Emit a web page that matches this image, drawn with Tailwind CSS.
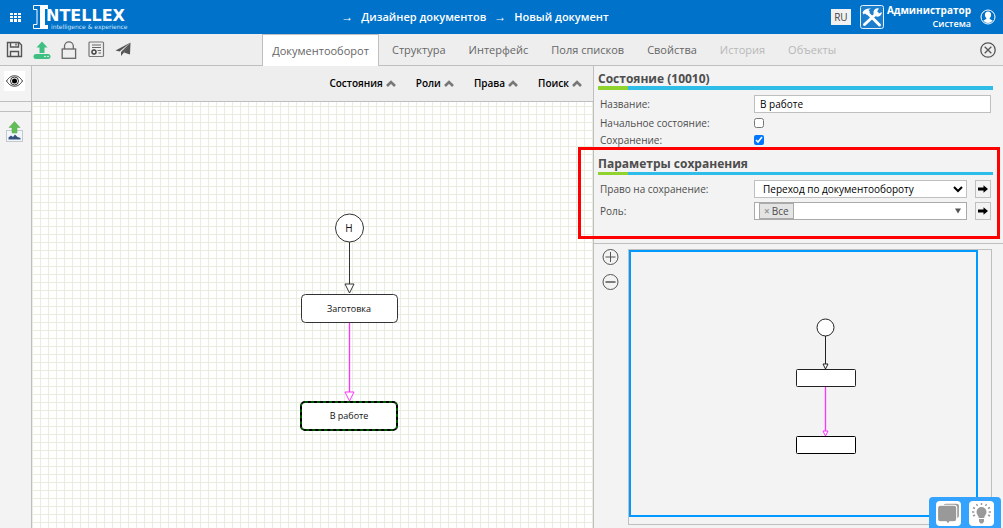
<!DOCTYPE html>
<html lang="ru">
<head>
<meta charset="utf-8">
<meta name="viewport" content="width=device-width, initial-scale=1">
<title>Новый документ</title>
<script src="https://cdn.jsdelivr.net/npm/@tailwindcss/browser@4"></script>
</head>
<body class="relative flex h-screen flex-col overflow-hidden bg-[#f3f3f3] font-['Open_Sans','Noto_Sans',sans-serif] text-[10px] text-[#4d4d4d]">

<header class="flex h-[34px] shrink-0 items-center bg-[#0072c9] text-white">
  <button aria-label="Меню" class="ml-2.5 flex w-[11px]">
    <svg width="11" height="9" viewBox="0 0 11 9" fill="#fff" shape-rendering="crispEdges"><path d="M0 0h3v2H0zM4 0h3v2H4zM8 0h3v2H8zM0 3h3v2H0zM4 3h3v2H4zM8 3h3v2H8zM0 6h3v3H0zM4 6h3v3H4zM8 6h3v3H8z"/></svg>
  </button>
  <a href="#" aria-label="Intellex" class="ml-3 flex w-24">
    <svg width="15" height="24" viewBox="0 0 15 24" class="shrink-0" fill="#fff">
      <path d="M7 .5H.5v4H4v15H.5v4H7" fill="none" stroke="#fff"/>
      <path d="M7 0h8v4h-3v16h3v4H7z"/>
    </svg>
    <span class="-ml-[2px] flex flex-col pt-1 font-['DejaVu_Sans']">
      <span class="text-[16px] font-bold leading-[14px]">NTELLEX</span>
      <span class="pl-[5px] text-[6px] leading-[7px] text-[#cfe4f6]">intelligence &amp; experience</span>
    </span>
  </a>
  <nav class="flex flex-1 items-center justify-center gap-2 pr-[10px] text-[11px] font-semibold leading-4">
    <span class="text-[12px]">→</span><a href="#">Дизайнер документов</a><span class="text-[12px]">→</span><a href="#">Новый документ</a>
  </nav>
  <button class="h-4 w-5 bg-[#f1f1f1] text-[10px] leading-4 text-[#444]">RU</button>
  <svg class="ml-2" width="26" height="26" viewBox="0 0 26 26">
    <rect x="1.500" y="1.500" width="23" height="23" rx="2" fill="#1b7fce" stroke="#e4f1fb"/>
    <path d="M8 8.500 20.500 21" stroke="#fff" stroke-width="3" stroke-linecap="round"/>
    <path d="M3.500 8.500C5 5.500 8 4 12 4.500L9.500 6l1.500 2-3 3-2-1.500-1.500 1z" fill="#fff"/>
    <path d="M5.500 20.500 18 9" stroke="#fff" stroke-width="3" stroke-linecap="round"/>
    <path d="M20 4.500a4.200 4.200 0 1 0 2.800 3.500l-2.800 1.500-2-2z" fill="#fff"/>
  </svg>
  <div class="ml-[2px] text-right leading-[13px]">
    <div class="text-[10px] font-bold">Администратор</div>
    <div class="text-[9px] font-semibold">Система</div>
  </div>
  <button aria-label="Профиль" class="ml-[9px] mr-[7px]">
    <svg width="16" height="16" viewBox="0 0 16 16"><circle cx="8" cy="8" r="7" fill="none" stroke="#fff"/><path d="M8 2.500c2 0 3.200 1.300 3.100 3.300 0 1.500-.7 2.600-1.400 3.300v1l3 1.400C11.500 13.200 9.800 14 8 14s-3.500-.8-4.700-2.500l3-1.400v-1C5.500 8.400 4.900 7.300 4.900 5.800 4.800 3.800 6 2.500 8 2.500z" fill="#fff"/></svg>
  </button>
</header>

<div class="flex h-8 shrink-0 items-stretch border-b border-[#bfbfbf] bg-[#eee]">
  <div class="flex w-[262px] shrink-0 items-center gap-[10px] pl-[6px]">
    <button aria-label="Сохранить"><svg width="17" height="17" viewBox="0 0 17 17" fill="none" stroke="#555" stroke-width="1.400"><path d="M1.500 1.500h11.500l2.500 2.500v11.500h-14z"/><path d="M4.500 1.500v4.500h8V1.500M4.500 15.500v-5h8v5M10 2.500v2"/></svg></button>
    <button aria-label="Опубликовать"><svg width="18" height="18" viewBox="0 0 18 18" fill="#40bf82"><path d="M9 .5 14.500 6.500h-3V12h-5V6.500h-3z"/><rect x=".5" y="13" width="17" height="5" rx="2.500"/><circle cx="12" cy="15.500" r=".8" fill="#fff"/><circle cx="15" cy="15.500" r=".8" fill="#fff"/></svg></button>
    <button aria-label="Заблокировать"><svg width="17" height="18" viewBox="0 0 17 18" fill="none" stroke="#666" stroke-width="1.300"><rect x="1.200" y="8" width="13.400" height="9.300"/><path d="M3.500 8V5.300a4.400 4.400 0 0 1 8.800 0V8"/></svg></button>
    <button aria-label="Журнал"><svg width="17" height="17" viewBox="0 0 17 17" fill="none" stroke="#666" stroke-width="1.200"><rect x="1" y="1" width="14.500" height="14.500" rx="1" stroke="#777"/><path d="M4 4h9M4 6.500h9M9.500 9.500H13M10.500 12H13"/><circle cx="6" cy="11" r="2" stroke="#444" stroke-width="1.400"/><path d="M6 8v1M6 13v1M3 11h1M8 11h1"/></svg></button>
    <button aria-label="Отправить"><svg width="16" height="15" viewBox="0 0 16 15" fill="#555"><path d="M15.500.5.500 8.500l4 1zM15.500.5 6 10v4l2.500-3zM15.500.5 9 10.500l6 2z"/></svg></button>
  </div>
  <nav class="-mb-px flex flex-1 text-[11px] leading-8 text-[#666]">
    <a href="#" class="w-[117px] border-x border-t border-[#bfbfbf] bg-white text-center">Документооборот</a>
    <a href="#" class="ml-[13px]">Структура</a>
    <a href="#" class="ml-[23px]">Интерфейс</a>
    <a href="#" class="ml-[23px]">Поля списков</a>
    <a href="#" class="ml-[23px]">Свойства</a>
    <a href="#" class="ml-[23px] text-[#b8b8b8]">История</a>
    <a href="#" class="ml-[23px] text-[#b8b8b8]">Объекты</a>
  </nav>
  <button aria-label="Закрыть" class="mr-[7px]"><svg width="16" height="16" viewBox="0 0 16 16" fill="none" stroke="#555" stroke-width="1.300"><circle cx="8" cy="8" r="7.200"/><path d="m4.700 4.700 6.600 6.600m0-6.600-6.600 6.600"/></svg></button>
</div>

<main class="flex min-h-0 flex-1">
  <aside class="flex w-8 shrink-0 flex-col items-center border-r border-[#bfbfbf] bg-[#f3f3f3]">
    <div class="flex h-9 w-full shrink-0 border-b border-[#bfbfbf] pl-1 pt-[5px]">
      <button aria-label="Просмотр" class="flex h-5 w-[21px] items-center justify-center bg-white"><svg width="17" height="12" viewBox="0 0 17 12"><path d="M.5 6C3.500 1.500 6 .8 8.500.8S13.500 1.500 16.500 6c-3 4.500-5.500 5.200-8 5.200S3.500 10.500.5 6z" fill="none" stroke="#333"/><circle cx="8.500" cy="6" r="4" fill="none" stroke="#333"/><circle cx="8.500" cy="6" r="2.500"/></svg></button>
    </div>
    <div class="h-[10px] w-full shrink-0 border-b border-[#bfbfbf]"></div>
    <button aria-label="Загрузить изображение" class="mr-[2px] mt-[9px]"><svg width="17" height="21" viewBox="0 0 17 21"><rect x=".5" y="9.500" width="16" height="11" fill="#f2f6fb" stroke="#c3c9d0"/><path d="M2.500 18.500v-2l2.500-2 2 1.500 2-2.500 2.500 2.500 3 1v1.500z" fill="#35527e"/><path d="m8.500.5 5.500 6h-3V12H6V6.500H3z" fill="#62bd57" stroke="#55a94b" stroke-width=".5"/></svg></button>
  </aside>

  <section class="flex min-w-0 flex-1 flex-col">
    <div class="flex h-9 shrink-0 items-center justify-end gap-5 border-b border-[#bfbfbf] bg-[#eee] pr-[11px] text-[10px] font-semibold text-black">
      <button class="flex items-center gap-[3px]">Состояния <svg width="10" height="8" viewBox="0 0 10 8" fill="none" stroke="#777" stroke-width="2.600"><path d="m1 6 4-4 4 4"/></svg></button>
      <button class="flex items-center gap-[3px]">Роли <svg width="10" height="8" viewBox="0 0 10 8" fill="none" stroke="#777" stroke-width="2.600"><path d="m1 6 4-4 4 4"/></svg></button>
      <button class="flex items-center gap-[3px]">Права <svg width="10" height="8" viewBox="0 0 10 8" fill="none" stroke="#777" stroke-width="2.600"><path d="m1 6 4-4 4 4"/></svg></button>
      <button class="flex items-center gap-[3px]">Поиск <svg width="10" height="8" viewBox="0 0 10 8" fill="none" stroke="#777" stroke-width="2.600"><path d="m1 6 4-4 4 4"/></svg></button>
    </div>
    <div class="min-h-0 flex-1 overflow-hidden bg-white">
      <svg width="100%" height="100%" font-family="Open Sans" font-size="9" text-anchor="middle" fill="#111">
        <defs><pattern id="grid" width="8" height="8" patternUnits="userSpaceOnUse"><path d="M.5 0v8M0 4.500h8" stroke="#e8eedf" fill="none"/></pattern></defs>
        <rect width="100%" height="100%" fill="url(#grid)"/>
        <circle cx="317.500" cy="126" r="14" fill="#fff" stroke="#333"/>
        <text x="317" y="130" font-size="10">Н</text>
        <path d="M317.500 140v42" stroke="#333"/><path d="M313 182h9l-4.500 9z" fill="#fff" stroke="#333"/>
        <rect x="269.500" y="192.500" width="96" height="28" rx="4" fill="#fff" stroke="#333"/>
        <text x="317" y="210">Заготовка</text>
        <path d="M317.500 221v69" stroke="#f3f" stroke-width="1.300"/><path d="M313 290h9l-4.500 9z" fill="#fff" stroke="#f3f"/>
        <rect x="269" y="300" width="96" height="28" rx="4" fill="#fff" stroke="#000" stroke-width="2"/>
        <rect x="269" y="300" width="96" height="28" rx="4" fill="none" stroke="#0a0" stroke-dasharray="3 3"/>
        <text x="317" y="317">В работе</text>
      </svg>
    </div>
  </section>

  <aside class="flex w-[410px] shrink-0 flex-col border-l border-[#bfbfbf] bg-[#f3f3f3]">
    <form class="flex h-[178px] shrink-0 flex-col border-b border-[#bfbfbf] pl-1 pr-[10px]">
      <h2 class="mt-1 h-4 text-[12px] font-bold leading-[18px]">Состояние (10010)</h2>
      <div class="flex h-1 shrink-0 bg-[#2dbde8]"><div class="w-[30px] bg-[#90d32f]"></div></div>
      <div class="mt-[5px] flex h-[18px] items-center pl-[2px]">
        <label for="name" class="w-[154px]">Название:</label>
        <input id="name" value="В работе" class="mr-[2px] h-[18px] min-w-0 flex-1 border border-[#bfbfbf] bg-white px-[5px] text-[10px] text-black">
      </div>
      <div class="mt-px flex h-[18px] items-center pl-[2px]">
        <label for="start" class="w-[154px]">Начальное состояние:</label><input id="start" type="checkbox" class="size-[10px]">
      </div>
      <div class="flex h-4 items-center pl-[2px]">
        <label for="save" class="w-[154px]">Сохранение:</label><input id="save" type="checkbox" checked class="size-[10px]">
      </div>
      <h2 class="mt-[7px] h-4 text-[12px] font-bold leading-[18px]">Параметры сохранения</h2>
      <div class="mt-px flex h-[3px] shrink-0 bg-[#2dbde8]"><div class="w-[30px] bg-[#90d32f]"></div></div>
      <div class="mt-[5px] flex h-[18px] items-center pl-[2px]">
        <label for="right" class="w-[154px]">Право на сохранение:</label>
        <select id="right" class="h-[18px] min-w-0 flex-1 border border-[#bfbfbf] bg-white pl-1 text-[10px] text-black"><option>Переход по документообороту</option></select>
        <button type="button" aria-label="Открыть право" class="ml-2 mr-[2px] flex h-[18px] w-4 items-center justify-center border border-[#bfbfbf]"><svg width="10" height="8" viewBox="0 0 10 8"><path d="M0 2.500h5.500V.2L10 4 5.500 7.800V5.500H0z"/></svg></button>
      </div>
      <div class="mt-1 flex h-[18px] items-center pl-[2px]">
        <label for="role" class="w-[154px]">Роль:</label>
        <div class="flex h-[18px] min-w-0 flex-1 border border-[#aaa] bg-white pl-1">
          <span class="flex h-4 items-center gap-[2px] border border-[#aaa] bg-[#e4e4e4] px-1"><button type="button" aria-label="Удалить" class="text-[10px] font-bold text-[#999]">×</button>Все</span>
          <input id="role" class="min-w-0 flex-1">
          <button type="button" aria-label="Показать роли" class="mr-[5px]"><svg width="6" height="6" viewBox="0 0 6 6" fill="#555"><path d="M0 .5h6l-3 5z"/></svg></button>
        </div>
        <button type="button" aria-label="Открыть роль" class="ml-2 mr-[2px] flex h-[18px] w-4 items-center justify-center border border-[#bfbfbf]"><svg width="10" height="8" viewBox="0 0 10 8"><path d="M0 2.500h5.500V.2L10 4 5.500 7.800V5.500H0z"/></svg></button>
      </div>
    </form>
    <div class="flex min-h-0 flex-1 pb-[3px] pl-2 pr-[11px] pt-[5px]">
      <div class="flex w-[26px] shrink-0 flex-col gap-[9px]">
        <button aria-label="Увеличить" class="size-4"><svg width="17" height="17" viewBox="0 0 17 17" fill="none" stroke="#555"><circle cx="8.500" cy="8" r="7.500"/><path d="M3.500 8h10M8.500 3v10"/></svg></button>
        <button aria-label="Уменьшить" class="size-4"><svg width="17" height="17" viewBox="0 0 17 17" fill="none" stroke="#555"><circle cx="8.500" cy="8" r="7.500"/><path d="M3.500 8h10" stroke-width="1.500"/></svg></button>
      </div>
      <div class="flex min-w-0 flex-1 border border-[#bfbfbf] pb-[7px] pr-[13px]">
        <div class="min-w-0 flex-1 border-2 border-[#0099ff]">
          <svg width="100%" height="100%" fill="#fff">
            <circle cx="194.500" cy="75.500" r="8.500" stroke="#222"/>
            <path d="M194.500 84v28" stroke="#222"/><path d="M192 112h5l-2.500 5z" stroke="#222"/>
            <rect x="165.500" y="117.500" width="59" height="17" rx="1" stroke="#222"/>
            <path d="M194.500 135v44" stroke="#f3f" stroke-width="1.300"/><path d="M192 179h5l-2.500 5z" stroke="#f3f"/>
            <rect x="165.500" y="184.500" width="59" height="17" rx="1" stroke="#000"/>
          </svg>
        </div>
      </div>
    </div>
  </aside>
</main>

<!-- Highlight over the saving parameters -->
<div class="pointer-events-none absolute right-[3px] top-[147px] h-[92px] w-[422px] border-3 border-[#f00]"></div>

<!-- Floating help buttons -->
<div class="absolute bottom-0 right-[2px] flex h-[31px] w-[72px] justify-between rounded-t bg-[#33a3ff] px-[7px] pt-1">
  <button aria-label="Чат" class="flex size-[25px] items-center justify-center rounded bg-white"><svg width="23" height="23" viewBox="0 0 21 21"><rect x="5.500" y="1" width="15" height="14" rx="2.500" fill="#999" stroke="#fff"/><path d="M3 3h12.500a2.500 2.500 0 0 1 2.500 2.500v10a2.500 2.500 0 0 1-2.500 2.500H11.500L10 20.500 8.500 18H3A2.500 2.500 0 0 1 .5 15.500v-10A2.500 2.500 0 0 1 3 3z" fill="#999" stroke="#fff"/></svg></button>
  <button aria-label="Подсказка" class="flex size-[25px] items-center justify-center rounded bg-white"><svg width="21" height="23" viewBox="0 0 21 23"><path d="M10.500 5a5 5 0 0 1 5 5c0 2.500-2 3.500-2.300 6H7.800C7.500 13.500 5.500 12.500 5.500 10a5 5 0 0 1 5-5zM8 17h5v2.500l-1.500 2h-2L8 19.500z" fill="#999"/><path d="M10.500 3V1M6.500 4l-1-2M14.500 4l1-2M4 6.500l-2-1M17 6.500l2-1M3.300 10H1M17.700 10H20M4 13l-2 1M17 13l2 1" stroke="#999" stroke-width="1.400"/></svg></button>
</div>
</body>
</html>
